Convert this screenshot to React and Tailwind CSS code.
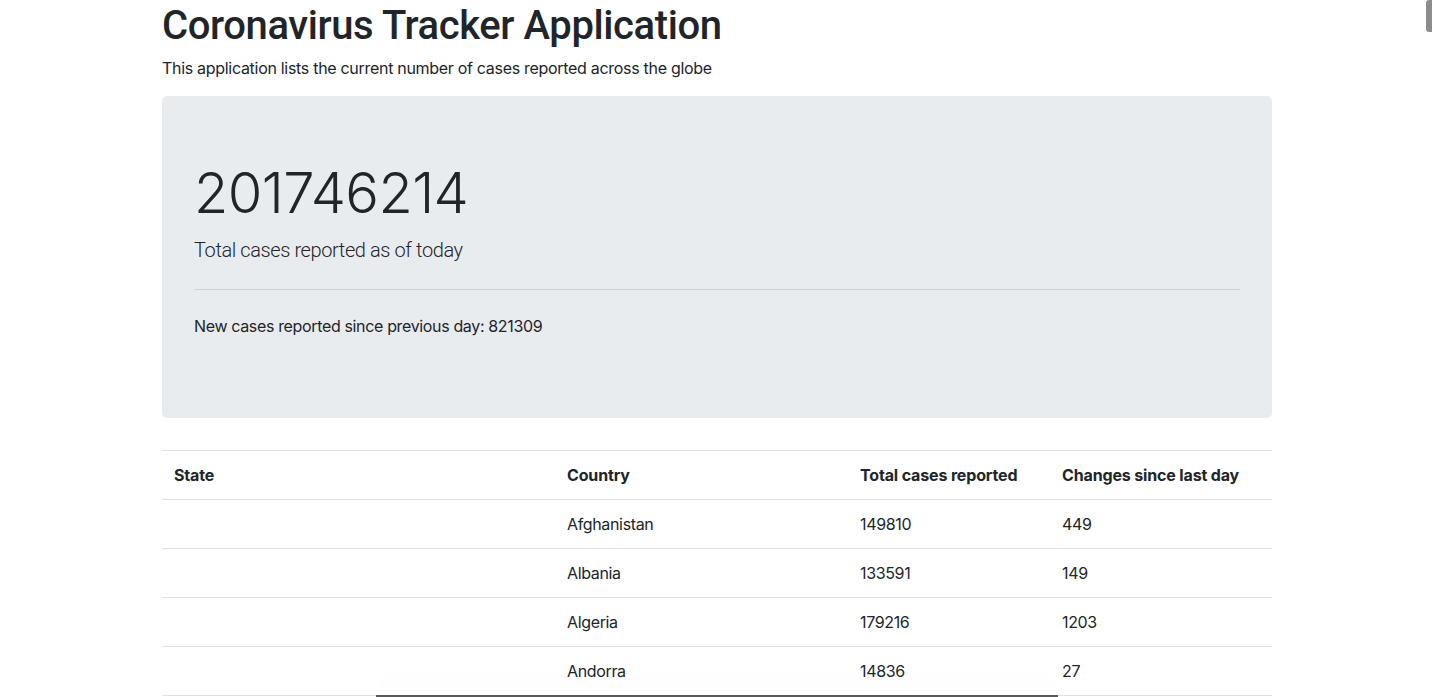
const rows = [
  { state: "", country: "Afghanistan", total: "149810", change: "449" },
  { state: "", country: "Albania", total: "133591", change: "149" },
  { state: "", country: "Algeria", total: "179216", change: "1203" },
  { state: "", country: "Andorra", total: "14836", change: "27" },
];

export default function App() {
  return (
    <div
      className="relative h-[697px] overflow-hidden bg-white text-[#212529] tracking-[-0.25px]"
      style={{ fontFamily: "Inter, 'Liberation Sans', sans-serif" }}
    >
      <div className="ml-[162px] w-[1110px]">
        <h1
          className="mb-1 text-[40px] font-medium leading-[52px] tracking-[-0.4px]"
          style={{ fontFamily: "Roboto, 'Liberation Sans', sans-serif" }}
        >
          Coronavirus Tracker Application
        </h1>
        <p className="mb-4 text-[16px] leading-6 tracking-[-0.3px]">
          This application lists the current number of cases reported across the globe
        </p>

        <div className="mb-8 rounded-[5px] bg-[#e9ecef] px-8 py-16">
          <h1 className="mb-2 text-[56px] font-light leading-[67px] tracking-[-0.6px]">201746214</h1>
          <p
            className="mb-4 text-[20px] font-light leading-[30px] tracking-[-0.4px]"
            style={{ fontFamily: "Roboto, 'Liberation Sans', sans-serif" }}
          >
            Total cases reported as of today
          </p>
          <hr className="my-6 border-t border-black/10" />
          <p className="mb-4 text-[16px] leading-6 tracking-[-0.35px]">
            New cases reported since previous day: 821309
          </p>
        </div>

        <table className="w-full border-collapse text-left text-[16px] leading-6">
          <thead>
            <tr className="border-t border-b border-[#dee2e6]">
              <th className="w-[393px] p-3 font-bold tracking-[-0.15px]">State</th>
              <th className="w-[293px] p-3 font-bold tracking-[-0.15px]">Country</th>
              <th className="w-[202px] p-3 font-bold tracking-[-0.15px]">Total cases reported</th>
              <th className="p-3 font-bold tracking-[-0.15px]">Changes since last day</th>
            </tr>
          </thead>
          <tbody>
            {rows.map((r) => (
              <tr key={r.country} className="border-b border-[#dee2e6]">
                <td className="p-3">{r.state}</td>
                <td className="p-3 tracking-[-0.35px]">{r.country}</td>
                <td className="p-3 tracking-[-0.35px]">{r.total}</td>
                <td className="p-3 tracking-[-0.35px]">{r.change}</td>
              </tr>
            ))}
          </tbody>
        </table>
      </div>

      <div className="absolute right-0 top-0 h-[32px] w-[6px] rounded-l-[3px] bg-[#8c8c8c]" />
      <div className="absolute bottom-0 left-[376px] h-[2px] w-[682px] bg-[#5a5a5a] shadow-[0_-10px_28px_rgba(0,0,0,0.1)]" />
    </div>
  );
}
